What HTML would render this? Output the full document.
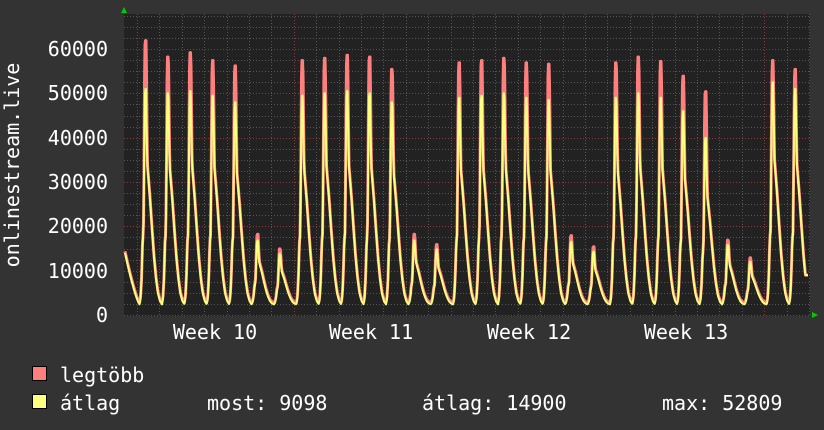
<!DOCTYPE html>
<html><head><meta charset="utf-8"><style>
html,body{margin:0;padding:0;background:#333333;}
svg{display:block}
text{font-family:"DejaVu Sans Mono","Liberation Mono",monospace;fill:#fff;font-size:20px}
</style></head><body>
<svg id="g" width="824" height="430" xmlns="http://www.w3.org/2000/svg">
<rect width="824" height="430" fill="#333333"/>
<rect x="124" y="14" width="686" height="302" fill="#222222"/>
<g id="grid"></g>
<path id="red" fill="none" stroke="#ff7f7f" stroke-width="3" stroke-linejoin="round"/>
<path id="yel" fill="none" stroke="#ffff7f" stroke-width="2" stroke-linejoin="round"/>
<polygon points="121,13 127,13 124,7" fill="#00cc00"/>
<polygon points="812,312 812,318 818,315" fill="#00cc00"/>
<g text-anchor="end">
<text x="108" y="56">60000</text>
<text x="108" y="100">50000</text>
<text x="108" y="145">40000</text>
<text x="108" y="189">30000</text>
<text x="108" y="233">20000</text>
<text x="108" y="278">10000</text>
<text x="108" y="322">0</text>
</g>
<text transform="translate(19,165) rotate(-90)" text-anchor="middle">onlinestream.live</text>
<g text-anchor="middle">
<text x="215" y="339">Week 10</text>
<text x="371" y="339">Week 11</text>
<text x="529" y="339">Week 12</text>
<text x="686" y="339">Week 13</text>
</g>
<rect x="32.5" y="366.5" width="14" height="14" fill="#ff7f7f" stroke="#000"/>
<rect x="32.5" y="394.5" width="14" height="14" fill="#ffff7f" stroke="#000"/>
<text x="60" y="382">legtöbb</text>
<text x="60" y="410">átlag</text>
<text x="207" y="410">most: 9098</text>
<text x="422" y="410">átlag: 14900</text>
<text x="662" y="410">max: 52809</text>
</svg>
<script>
(function(){
var NS="http://www.w3.org/2000/svg",grid=document.getElementById('grid');
function line(x1,y1,x2,y2,c){var l=document.createElementNS(NS,'line');l.setAttribute('x1',x1);l.setAttribute('y1',y1);l.setAttribute('x2',x2);l.setAttribute('y2',y2);l.setAttribute('stroke',c);l.setAttribute('stroke-dasharray','1,2');l.setAttribute('stroke-width','1');grid.appendChild(l);}
var Y=function(v){return 315-v*0.004433;};
for(var v=2500;v<=67500;v+=2500){var y=Math.round(Y(v))+0.5;if(y<14)break;line(124,y,810,y,v%10000==0?'#8a3a3a':'#555');}
for(var x=137;x<810;x+=22.4){var xx=Math.round(x)+0.5;var d=Math.round((x-137)/22.4);line(xx,14,xx,316,(d%7==0)?'#8a3a3a':'#555');}
line(124,315.5,810,315.5,'#8a3a3a');
var red=[17000,61500,57800,58800,57000,55800,17800,14500,57000,57500,58200,57800,55000,17800,15500,56500,57000,57500,56500,56200,17500,15000,56500,57800,56800,53500,50000,16500,12500,57000,55000];
var yel=[16000,51000,50000,50500,49500,48000,16800,13800,49500,50000,50500,50000,48000,16800,14800,49000,49500,50000,49000,48500,16500,14300,49000,50000,49000,46000,40000,15800,12000,52500,51000];
var D=[0,1,2,3,3.8,4.4,5.1,5.5,6.4,6.9,7.7,10.4,12.4,14.4,16.4,18.4,20.4,22.4];
var F=[0,0.03,0.12,0.29,0.33,0.6,0.92,1,1,0.84,0.65,0.49,0.35,0.22,0.12,0.05,0.015,0];
function frac(d){for(var i=1;i<D.length;i++){if(d<=D[i]){var u=(d-D[i-1])/(D[i]-D[i-1]);return F[i-1]+(F[i]-F[i-1])*u;}}return 0;}
function bump(d){if(d<4.4||d>7.7)return 0;if(d<5.0)return (d-4.4)/0.6;if(d<6.9)return 1;return (7.7-d)/0.8;}
var T0=139.6,B=2400;
function val(x,isRed){var k=Math.floor((x-T0)/22.4);var d=(x-T0)-k*22.4;var py=yel[k+1]||yel[yel.length-1];var pr=red[k+1]||red[red.length-1];
 var v=B+frac(d)*(py-B);
 if(isRed){v=v+400+(pr-py)*bump(d);}
 return v;}
function build(isRed){var d='';for(var x=125;x<=808;x+=0.5){var v=val(x,isRed);if(x<=T0){v=B+(14000-B)*Math.pow((T0-x)/(T0-125),1.3);if(isRed)v+=400;}if(x>=801){v=Math.max(v,9000);}d+=(d?'L':'M')+x+','+Y(v).toFixed(1);}return d;}
document.getElementById('red').setAttribute('d',build(true));
document.getElementById('yel').setAttribute('d',build(false));
})();
</script>
</body></html>
